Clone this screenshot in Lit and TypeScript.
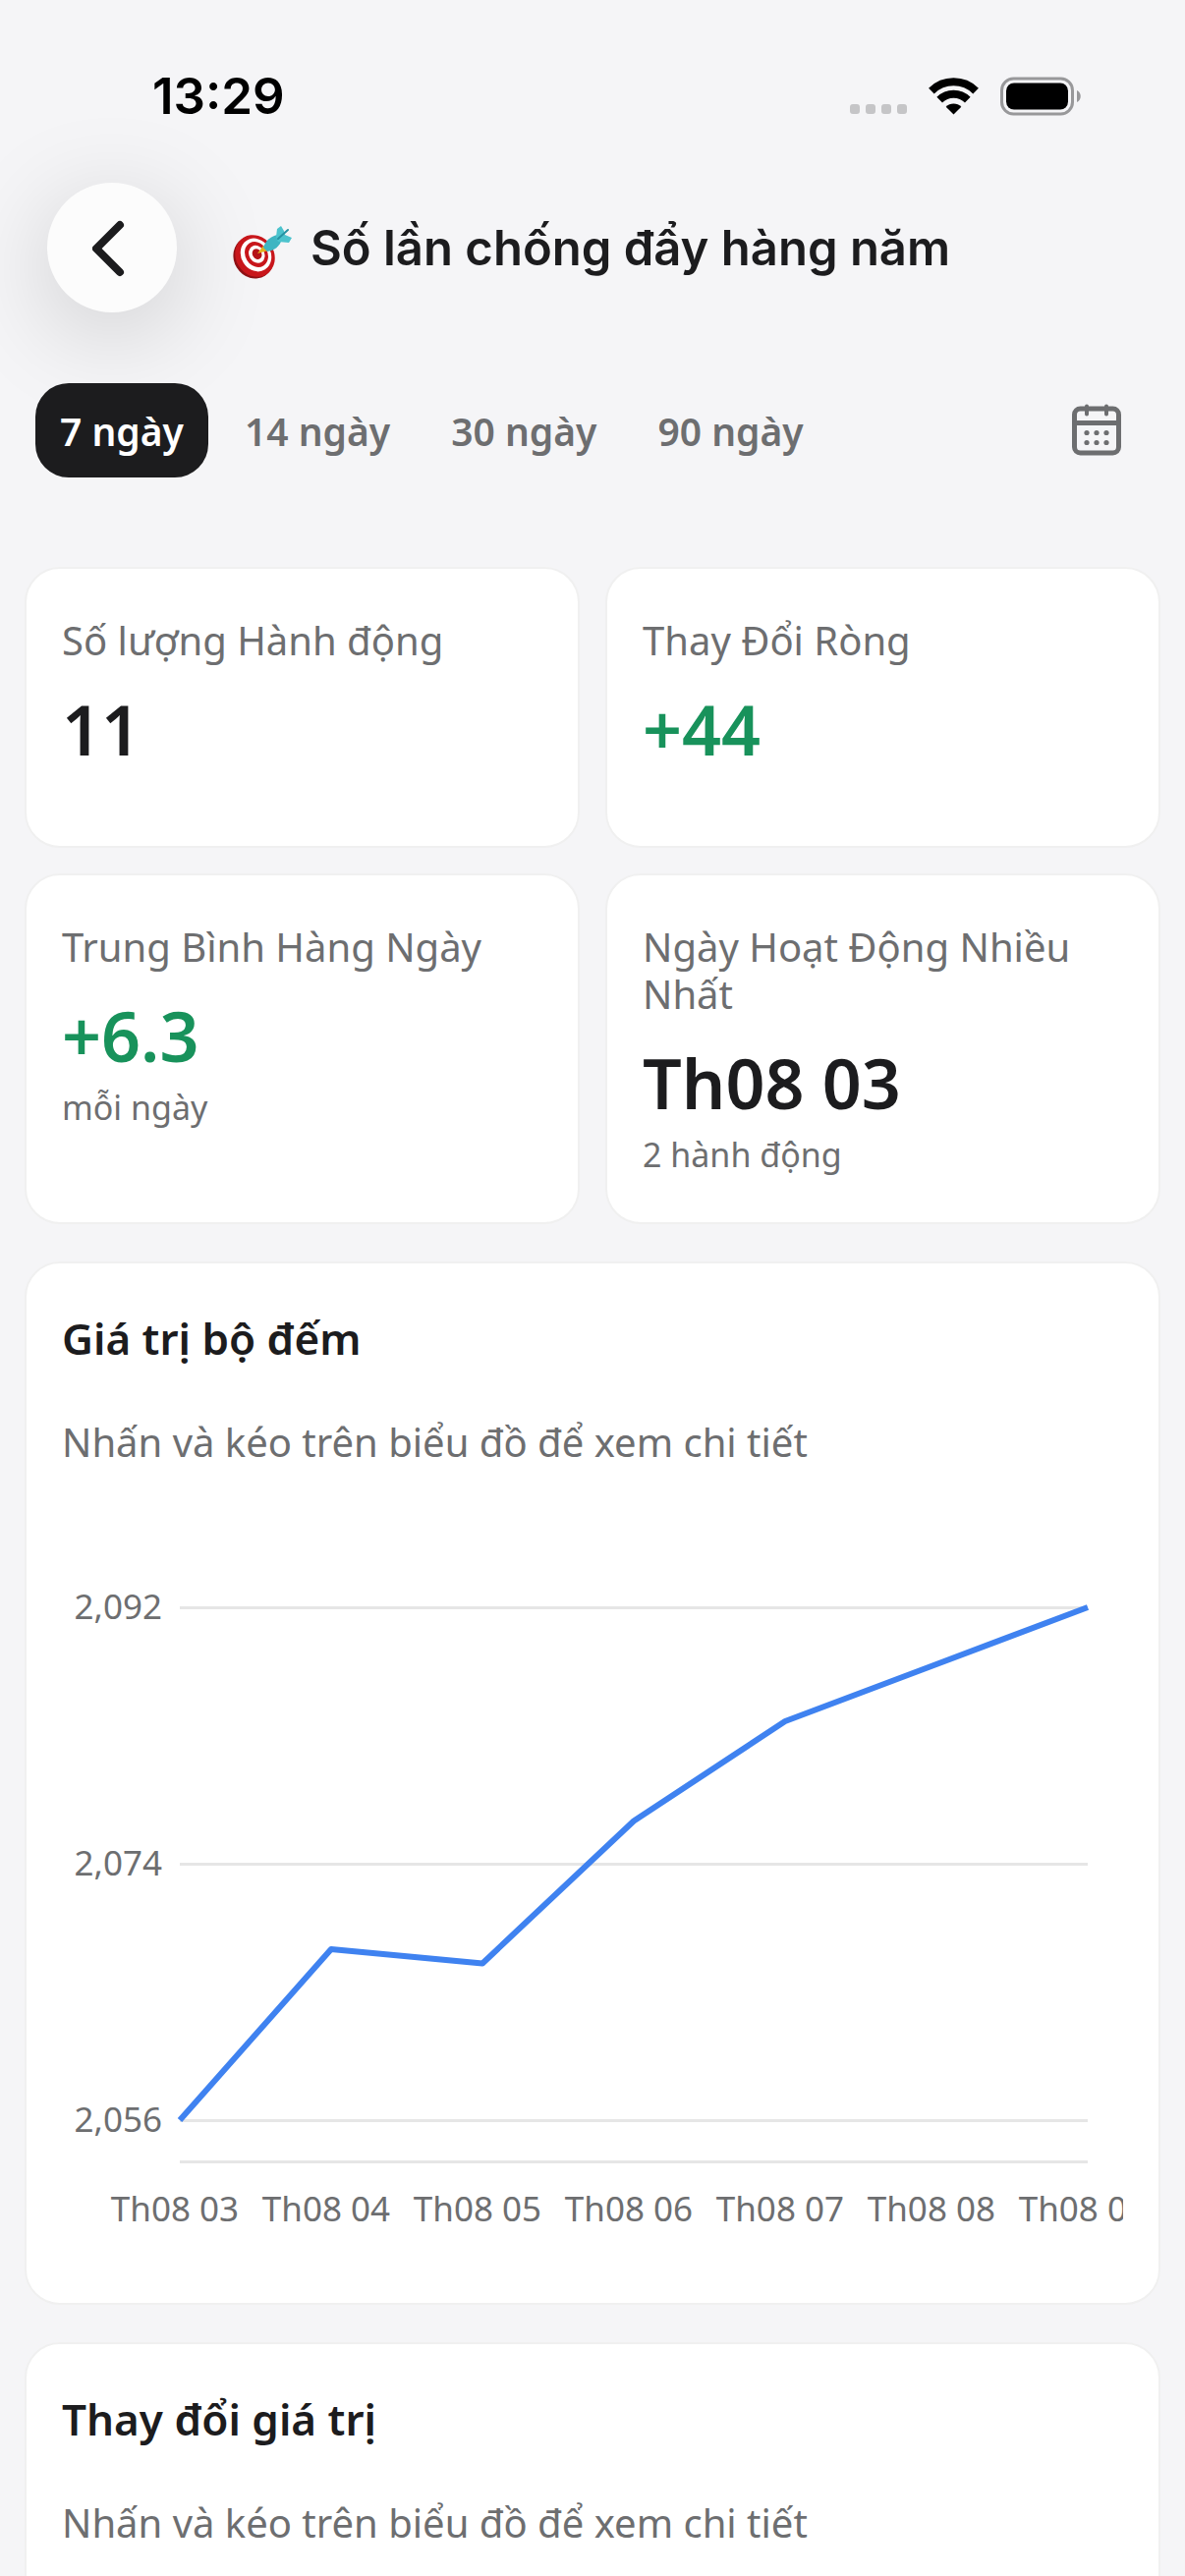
import { LitElement, html, svg, css } from "lit";
import { customElement, property, state } from "lit/decorators.js";
import { classMap } from "lit/directives/class-map.js";

interface Stat {
  label: string;
  value: string;
  note?: string;
  positive?: boolean;
}

interface Sample {
  day: string;
  value: number;
}

const RANGES = ["7 ngày", "14 ngày", "30 ngày", "90 ngày"];

const STATS: Stat[] = [
  { label: "Số lượng Hành động", value: "11" },
  { label: "Thay Đổi Ròng", value: "+44", positive: true },
  { label: "Trung Bình Hàng Ngày", value: "+6.3", note: "mỗi ngày", positive: true },
  { label: "Ngày Hoạt Động Nhiều Nhất", value: "Th08 03", note: "2 hành động" },
];

const SAMPLES: Sample[] = [
  { day: "Th08 03", value: 2056 },
  { day: "Th08 04", value: 2068 },
  { day: "Th08 05", value: 2067 },
  { day: "Th08 06", value: 2077 },
  { day: "Th08 07", value: 2084 },
  { day: "Th08 08", value: 2088 },
  { day: "Th08 09", value: 2092 },
];

@customElement("status-bar")
class StatusBar extends LitElement {
  static styles = css`
    :host {
      display: flex;
      align-items: center;
      justify-content: space-between;
      padding: 66px 106px 0 155px;
      font: 600 51px/64px Inter, "Liberation Sans", sans-serif;
      color: #000;
    }
    .icons {
      display: flex;
      align-items: center;
      gap: 22px;
    }
    .icons svg {
      display: block;
    }
  `;

  render() {
    return html`
      <time>13:29</time>
      <div class="icons">
        <svg width="58" height="40" viewBox="0 0 58 40" fill="#c5c5c7" aria-hidden="true">
          <rect x="0" y="28" width="10" height="10" rx="3" />
          <rect x="16" y="28" width="10" height="10" rx="3" />
          <rect x="32" y="28" width="10" height="10" rx="3" />
          <rect x="48" y="28" width="10" height="10" rx="3" />
        </svg>
        <svg width="51" height="40" viewBox="0 0 51 40" aria-hidden="true">
          <g fill="none" stroke="#000" stroke-width="8">
            <path d="M2.9 14.6a32.2 32.2 0 0 1 45.2 0" />
            <path d="M11.2 23.6a20.4 20.4 0 0 1 28.6 0" />
          </g>
          <path d="M25.5 38.6 17.7 30.8a11 11 0 0 1 15.6 0Z" />
        </svg>
        <svg width="82" height="40" viewBox="0 0 82 40" aria-hidden="true">
          <rect x="1.5" y="2" width="72" height="36" rx="12" fill="none" stroke="#98989a" stroke-width="3" />
          <rect x="6" y="6.5" width="63" height="27" rx="8" />
          <path d="M78 14c5 2 5 10 0 12Z" fill="#98989a" />
        </svg>
      </div>
    `;
  }
}

@customElement("stat-card")
class StatCard extends LitElement {
  @property({ attribute: false }) stat!: Stat;

  static styles = css`
    :host {
      display: block;
      box-sizing: border-box;
      min-height: 286px;
      padding: 49px 36px 48px;
      border: 2px solid #f0f0f0;
      border-radius: 36px;
      background: #fff;
      color: #1c1c1e;
    }
    .label,
    .value,
    .note {
      margin: 0;
    }
    .label {
      font-size: 40px;
      font-weight: 400;
      line-height: 48px;
      color: #6d6e70;
    }
    .value {
      margin-top: 26px;
      font-size: 70px;
      font-weight: 600;
      line-height: 80px;
    }
    .positive {
      color: #18925b;
    }
    .note {
      margin-top: 12px;
      font-size: 34px;
      line-height: 42px;
      color: #6d6e70;
    }
  `;

  render() {
    const { label, value, note, positive } = this.stat;
    return html`
      <h2 class="label">${label}</h2>
      <p class=${classMap({ value: true, positive: !!positive })}>${value}</p>
      ${note ? html`<p class="note">${note}</p>` : null}
    `;
  }
}

@customElement("line-chart")
class LineChart extends LitElement {
  @property({ attribute: false }) samples: Sample[] = [];

  static styles = css`
    :host {
      display: block;
      overflow: hidden;
      padding: 24px 0;
      font-size: 35px;
      line-height: 48px;
      color: #6d6e70;
    }
    .body {
      display: grid;
      grid-template-columns: 102px 1fr;
      column-gap: 18px;
      padding-right: 36px;
    }
    .scale,
    .plot {
      display: grid;
      grid-template-rows: 261px 261px 42px;
    }
    .tick {
      margin-top: -24px;
      text-align: right;
    }
    .plot {
      position: relative;
      border-bottom: 3px solid #e6e6e6;
    }
    .line {
      border-top: 3px solid #e6e6e6;
    }
    .trace {
      position: absolute;
      top: 1px;
      left: 0;
      width: 100%;
      height: 522px;
      overflow: visible;
    }
    .days {
      display: grid;
      grid-auto-flow: column;
      grid-auto-columns: calc((100% - 118px) / 6);
      margin: 22px 0 0 38px;
      text-align: center;
      white-space: nowrap;
    }
  `;

  render() {
    const values = this.samples.map((s) => s.value);
    const min = Math.min(...values);
    const max = Math.max(...values);
    const ticks = [max, (min + max) / 2, min];
    const points = values
      .map((v, i) => `${(i / (values.length - 1)) * 924},${((max - v) / (max - min)) * 522}`)
      .join(" ");
    return html`
      <div class="body">
        <div class="scale">
          ${ticks.map((t) => html`<span class="tick">${t.toLocaleString("en-US")}</span>`)}
        </div>
        <div class="plot">
          ${ticks.map(() => html`<div class="line"></div>`)}
          <svg class="trace" viewBox="0 0 924 522" preserveAspectRatio="none" aria-hidden="true">
            ${svg`<polyline points=${points} fill="none" stroke="#3f82f0" stroke-width="6" stroke-linejoin="round" vector-effect="non-scaling-stroke" />`}
          </svg>
        </div>
      </div>
      <div class="days">${this.samples.map((s) => html`<span>${s.day}</span>`)}</div>
    `;
  }
}

@customElement("app-root")
class AppRoot extends LitElement {
  @state() private range = 0;

  static styles = css`
    :host {
      display: flex;
      flex-direction: column;
      height: 100vh;
      overflow: hidden;
      background: #f5f5f7;
      font-family: "Noto Sans", "Open Sans", sans-serif;
      color: #1c1c1e;
    }
    button {
      border: 0;
      padding: 0;
      background: none;
      font: inherit;
      color: inherit;
    }
    .header {
      display: flex;
      align-items: center;
      padding: 56px 48px 0;
    }
    .back {
      display: grid;
      place-items: center;
      flex: none;
      width: 132px;
      height: 132px;
      border-radius: 50%;
      background: #fcfcfc;
      box-shadow: 0 20px 100px rgba(0, 0, 0, 0.17);
    }
    .title {
      display: flex;
      align-items: center;
      gap: 18px;
      margin: 2px 0 0 56px;
      font: 600 49px/64px Inter, "Liberation Sans", sans-serif;
    }
    .target {
      flex: none;
      margin-top: 8px;
    }
    .ranges {
      display: flex;
      align-items: center;
      gap: 12px;
      padding: 72px 36px 91px;
      font-size: 39px;
      font-weight: 600;
      color: #6d6e70;
    }
    .range {
      position: relative;
      height: 96px;
      padding: 0 25px;
      border-radius: 34px;
    }
    .selected {
      background: #1c1c1e;
      color: #fff;
    }
    .calendar {
      margin-left: auto;
      margin-right: 27px;
    }
    .calendar svg {
      display: block;
    }
    .content {
      flex: 1;
      min-height: 0;
      display: flex;
      flex-direction: column;
      gap: 38px;
      overflow-y: auto;
      scrollbar-width: none;
      padding: 0 25px;
    }
    .stats {
      display: grid;
      grid-template-columns: 1fr 1fr;
      gap: 26px;
    }
    .card {
      flex: none;
      box-sizing: border-box;
      min-height: 320px;
      padding: 48px 36px;
      border: 2px solid #f0f0f0;
      border-radius: 36px;
      background: #fff;
    }
    .name {
      margin: 0;
      font-size: 44px;
      font-weight: 600;
      line-height: 56px;
    }
    .hint {
      margin: 54px 0 119px;
      font-size: 40px;
      line-height: 48px;
      color: #6d6e70;
    }
  `;

  render() {
    return html`
      <status-bar></status-bar>
      <header class="header">
        <button class="back" aria-label="Quay lại">
          <svg width="40" height="60" viewBox="0 0 40 60" fill="none" stroke="#1c1c1e" stroke-width="8" stroke-linecap="round" stroke-linejoin="round">
            <path d="M28 7 4 31l24 24" />
          </svg>
        </button>
        <h1 class="title">
          <svg class="target" width="62" height="54" viewBox="0 0 62 54" aria-hidden="true">
            <ellipse cx="22" cy="32" rx="20" ry="22" transform="rotate(-32 22 32)" fill="#8e1014" />
            <ellipse cx="23.5" cy="30.5" rx="19.5" ry="22" transform="rotate(-32 23.5 30.5)" fill="#c8161b" />
            <ellipse cx="24.5" cy="29.5" rx="15" ry="17.5" transform="rotate(-32 24.5 29.5)" fill="#fff" />
            <ellipse cx="25" cy="29" rx="11.3" ry="13.5" transform="rotate(-32 25 29)" fill="#c8161b" />
            <ellipse cx="25.3" cy="28.8" rx="7.8" ry="9.3" transform="rotate(-32 25.3 28.8)" fill="#fff" />
            <ellipse cx="25.6" cy="28.6" rx="4.6" ry="5.6" transform="rotate(-32 25.6 28.6)" fill="#b51318" />
            <path d="m26 28 6-8 5 5Z" fill="#e5b11f" />
            <path d="M32 22c2-7 8-12 15-13l4 4c-2 8-8 12-15 13Z" fill="#3fb5c2" />
            <path d="M45 11 46 3l4-3 3 5 1 4 7 3-3 5-11-1Z" fill="#4cc3cd" />
            <path d="m47 13 10-9" stroke="#2592a3" stroke-width="2" stroke-linecap="round" />
          </svg>
          Số lần chống đẩy hàng năm
        </h1>
      </header>
      <nav class="ranges">
        ${RANGES.map(
          (label, i) => html`<button
            class=${classMap({ range: true, selected: i === this.range })}
            aria-pressed=${i === this.range}
            @click=${() => (this.range = i)}
          >${label}</button>`
        )}
        <button class="calendar" aria-label="Chọn ngày">
          <svg width="54" height="54" viewBox="0 0 54 54" fill="none" stroke="#6d6e70" stroke-width="5" stroke-linecap="round">
            <rect x="4.5" y="5" width="45" height="45" rx="6" />
            <path d="M5 19.5h44" />
            <path d="M17 2.5v8M37 2.5v8" stroke-width="4" />
            <g fill="#6d6e70" stroke="none">
              <circle cx="17" cy="29.5" r="2.6" /><circle cx="27" cy="29.5" r="2.6" /><circle cx="37" cy="29.5" r="2.6" />
              <circle cx="17" cy="39.5" r="2.6" /><circle cx="27" cy="39.5" r="2.6" /><circle cx="37" cy="39.5" r="2.6" />
            </g>
          </svg>
        </button>
      </nav>
      <main class="content">
        <section class="stats">
          ${STATS.map((s) => html`<stat-card .stat=${s}></stat-card>`)}
        </section>
        <section class="card">
          <h2 class="name">Giá trị bộ đếm</h2>
          <p class="hint">Nhấn và kéo trên biểu đồ để xem chi tiết</p>
          <line-chart .samples=${SAMPLES}></line-chart>
        </section>
        <section class="card">
          <h2 class="name">Thay đổi giá trị</h2>
          <p class="hint">Nhấn và kéo trên biểu đồ để xem chi tiết</p>
        </section>
      </main>
    `;
  }
}
